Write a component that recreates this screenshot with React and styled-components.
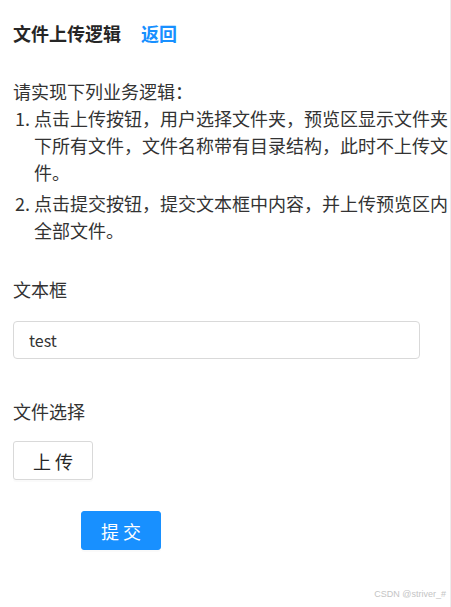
import React from 'react';
import styled, { createGlobalStyle } from 'styled-components';

const GlobalStyle = createGlobalStyle`
  html, body {
    margin: 0;
    padding: 0;
    background: #fff;
  }
  body {
    font-family: "Noto Sans CJK SC", "Noto Sans", sans-serif;
    color: #333;
  }
  * {
    box-sizing: border-box;
  }
`;

const RULES = [
  '点击上传按钮，用户选择文件夹，预览区显示文件夹下所有文件，文件名称带有目录结构，此时不上传文件。',
  '点击提交按钮，提交文本框中内容，并上传预览区内全部文件。',
];

const App = () => (
  <Page>
    <GlobalStyle />
    <Header>
      <Title>文件上传逻辑</Title>
      <BackLink href="#">返回</BackLink>
    </Header>

    <Intro>请实现下列业务逻辑：</Intro>
    <RuleList>
      { RULES.map((rule) => (
        <RuleItem key={rule}>{rule}</RuleItem>
      ))}
    </RuleList>

    <FieldLabel>文本框</FieldLabel>
    <TextInput defaultValue="test" />

    <FieldLabel spaced>文件选择</FieldLabel>
    <Button>上 传</Button>

    <SubmitRow>
      <Button primary>提 交</Button>
    </SubmitRow>

    <Watermark>CSDN @striver_#</Watermark>
  </Page>
);

const Page = styled.div`
  position: relative;
  width: 451px;
  min-height: 100vh;
  padding: 20px 0 40px 13px;
  border-right: 1px solid #ececec;
`;

const Header = styled.div`
  display: flex;
  align-items: baseline;
  gap: 20px;
  line-height: 27px;
`;

const Title = styled.h1`
  margin: 0;
  font-size: 18px;
  font-weight: 700;
  color: #262626;
`;

const BackLink = styled.a`
  font-size: 18px;
  font-weight: 700;
  color: #1890ff;
  text-decoration: none;
`;

const Intro = styled.p`
  margin: 31px 0 0;
  font-size: 18px;
  line-height: 27px;
`;

const RuleList = styled.ol`
  margin: 0;
  padding-left: 21px;
  font-size: 18px;
  line-height: 27px;
`;

const RuleItem = styled.li`
  margin-bottom: 4px;
`;

const FieldLabel = styled.div`
  margin-top: ${(p) => (p.spaced ? '39px' : '32px')};
  font-size: 18px;
  line-height: 27px;
`;

const TextInput = styled.input`
  display: block;
  width: 407px;
  height: 38px;
  margin-top: 18px;
  padding: 0 15px;
  border: 1px solid #d9d9d9;
  border-radius: 4px;
  font-family: inherit;
  font-size: 16px;
  color: #333;
  outline: none;
`;

const Button = styled.button`
  display: block;
  width: 80px;
  height: 39px;
  margin-top: ${(p) => (p.primary ? '0' : '16px')};
  border: 1px solid ${(p) => (p.primary ? '#1890ff' : '#d9d9d9')};
  border-radius: 3px;
  background: ${(p) => (p.primary ? '#1890ff' : '#fff')};
  color: ${(p) => (p.primary ? '#fff' : '#262626')};
  font-family: inherit;
  font-size: 18px;
  box-shadow: 0 2px 0 rgba(0, 0, 0, 0.02);
  cursor: pointer;
`;

const SubmitRow = styled.div`
  margin-top: 31px;
  padding-left: 68px;
`;

const Watermark = styled.span`
  position: absolute;
  right: 4px;
  bottom: 8px;
  font-family: "Liberation Sans", Arial, sans-serif;
  font-size: 9px;
  color: #c4c4c4;
`;

export default App;
